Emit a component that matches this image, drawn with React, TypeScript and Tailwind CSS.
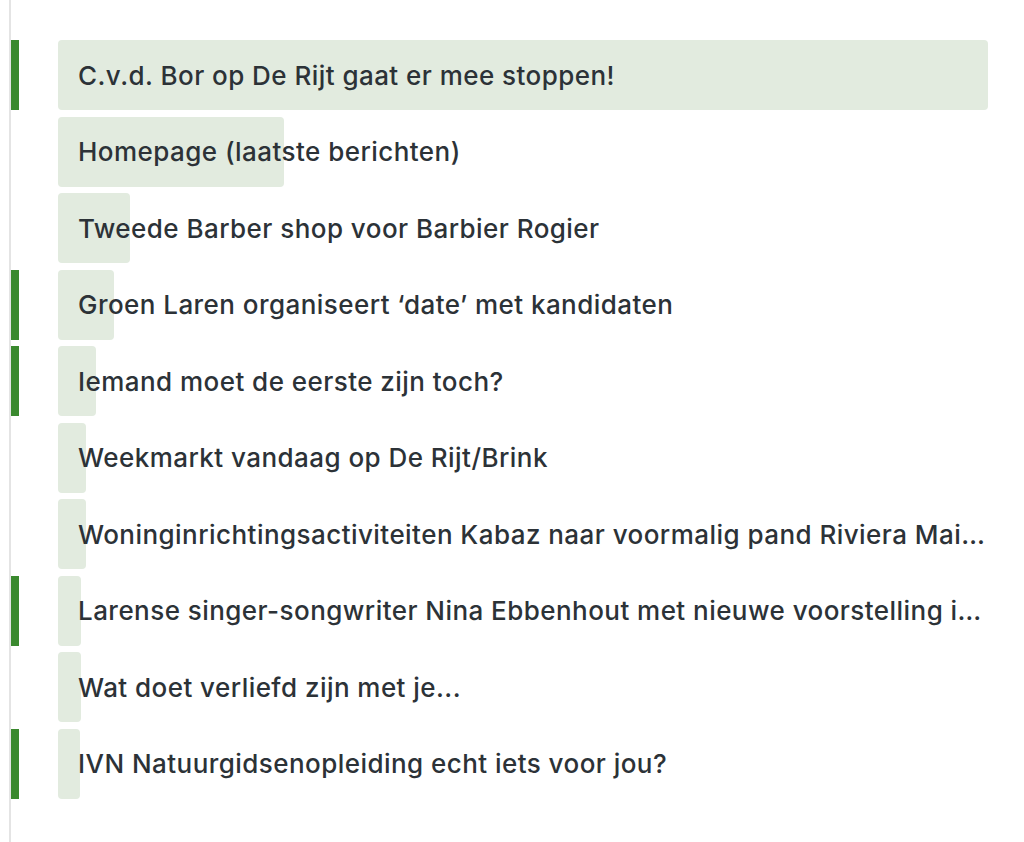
import React from "react";

const items: { title: string; flagged: boolean; w: number }[] = [
  { title: "C.v.d. Bor op De Rijt gaat er mee stoppen!", flagged: true, w: 930 },
  { title: "Homepage (laatste berichten)", flagged: false, w: 226 },
  { title: "Tweede Barber shop voor Barbier Rogier", flagged: false, w: 72 },
  { title: "Groen Laren organiseert \u2018date\u2019 met kandidaten", flagged: true, w: 56 },
  { title: "Iemand moet de eerste zijn toch?", flagged: true, w: 38 },
  { title: "Weekmarkt vandaag op De Rijt/Brink", flagged: false, w: 28 },
  { title: "Woninginrichtingsactiviteiten Kabaz naar voormalig pand Riviera Maison", flagged: false, w: 28 },
  { title: "Larense singer-songwriter Nina Ebbenhout met nieuwe voorstelling in Singer", flagged: true, w: 23 },
  { title: "Wat doet verliefd zijn met je...", flagged: false, w: 23 },
  { title: "IVN Natuurgidsenopleiding echt iets voor jou?", flagged: true, w: 22 },
];

export default function App() {
  return (
    <div className="min-h-[842px] bg-white pl-[9px]" style={{ fontFamily: "Inter, 'Liberation Sans', sans-serif" }}>
      <div className="min-h-[842px] border-l-2 border-[#e4e4e4] pt-[40px] flex flex-col gap-[6.5px]">
        {items.map((it, i) => (
          <div key={i} className="flex h-[70px]">
            <div className={`w-[8px] shrink-0 ${it.flagged ? "bg-[#3a892e]" : ""}`} />
            <div className="ml-[39px] w-[930px] grid">
              <div
                className="col-start-1 row-start-1 h-full rounded-[4px] bg-[#e2ebdf]"
                style={{ width: it.w }}
              />
              <div className="col-start-1 row-start-1 flex items-center pl-[20px] pr-0 min-w-0">
                <span className="truncate text-[26px] font-medium text-[#2c3237] tracking-[0.45px]">
                  {it.title}
                </span>
              </div>
            </div>
          </div>
        ))}
      </div>
    </div>
  );
}
